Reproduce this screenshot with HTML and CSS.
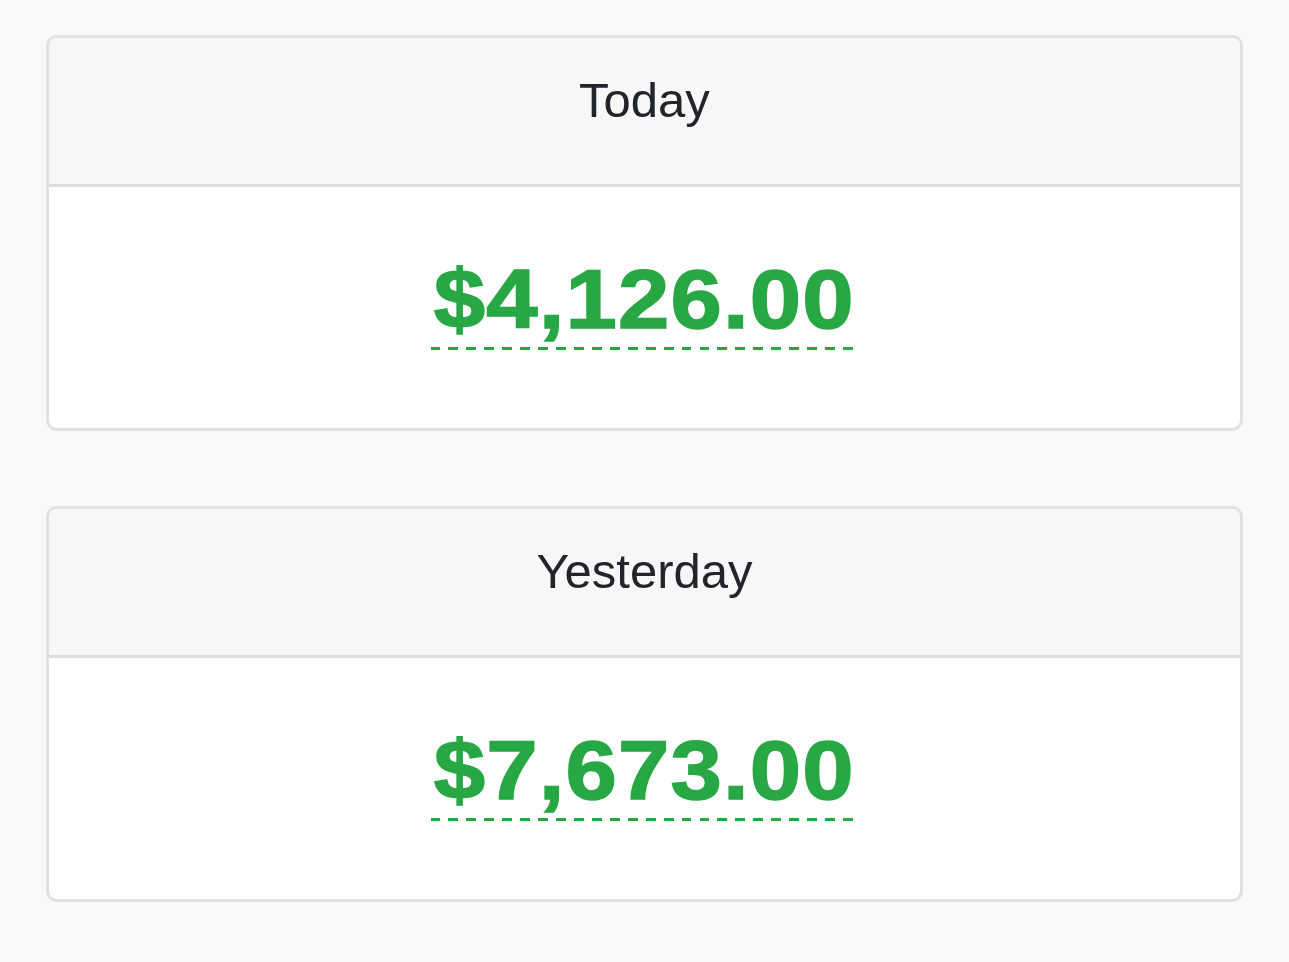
FILE: index.html
```html
<!DOCTYPE html>
<html>
<head>
<meta charset="utf-8">
<link rel="stylesheet" href="styles.css">
</head>
<body>
<main class="page">
  <section class="card">
    <header class="card-header">Today</header>
    <div class="card-body"><span class="amount">$4,126.00</span></div>
  </section>
  <section class="card">
    <header class="card-header">Yesterday</header>
    <div class="card-body"><span class="amount">$7,673.00</span></div>
  </section>
</main>
</body>
</html>
```
FILE: styles.css
```css
html, body {
  margin: 0;
  padding: 0;
  background: #f9f9f9;
}
.page {
  padding: 35px 46px 60px;
  display: flex;
  flex-direction: column;
  gap: 75px;
}
.card {
  background: #fff;
  border: 3px solid #e1e1e1;
  border-radius: 11px;
  overflow: hidden;
  display: flex;
  flex-direction: column;
}
.card-header {
  height: 149px;
  background: #f7f7f7;
  border-bottom: 3px solid #dedede;
  display: flex;
  align-items: center;
  justify-content: center;
  font-family: "Liberation Sans", Arial, sans-serif;
  font-size: 49px;
  color: #212529;
  box-sizing: border-box;
  padding-bottom: 22px;
}
.card-body {
  height: 241px;
  display: flex;
  align-items: center;
  justify-content: center;
}
.amount {
  display: inline-block;
  font-family: "Liberation Sans", Arial, sans-serif;
  font-weight: 700;
  font-size: 84px;
  line-height: 1;
  letter-spacing: 1px;
  color: #28a745;
  -webkit-text-stroke: 1.5px #28a745;
  padding: 0 3px 9px;
  margin-bottom: 8px;
  transform: scaleX(1.1);
  background: repeating-linear-gradient(to right, #28a745 0 9px, transparent 9px 16.3px) left bottom / 100% 3px no-repeat;
}
```
